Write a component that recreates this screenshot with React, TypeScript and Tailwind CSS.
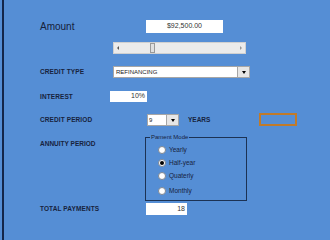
import React from "react";

const font = { fontFamily: '"Liberation Sans", Arial, sans-serif' };

function Radio({ label, checked }: { label: string; checked?: boolean }) {
  return (
    <div className="flex items-center gap-[3px] h-[8px]">
      <span className="w-[8px] h-[8px] rounded-full bg-white border border-[#7d8590] flex items-center justify-center">
        {checked && <span className="w-[4px] h-[4px] rounded-full bg-black" />}
      </span>
      <span className="text-[6.5px] text-[#17233d]">{label}</span>
    </div>
  );
}

function Label({ children, w }: { children: React.ReactNode; w: string }) {
  return (
    <div className={`${w} shrink-0 text-[6.5px] font-bold text-[#17233d] tracking-[0.1px]`}>
      {children}
    </div>
  );
}

export default function App() {
  return (
    <div style={font} className="w-[330px] h-screen min-h-[220px] bg-[#558ed5] pl-[2px] overflow-hidden">
      <div className="h-full border-l-2 border-[#14264a] pl-[36px] flex flex-col">
        {/* amount */}
        <div className="flex items-center h-[13px] mt-[20px]">
          <div className="w-[106px] shrink-0 text-[10px] text-[#16213a]">Amount</div>
          <div className="w-[77px] h-[13px] bg-white flex items-center justify-center text-[7px] text-[#333]">
            $92,500.00
          </div>
        </div>

        {/* scrollbar */}
        <div className="flex items-center h-[12px] mt-[9px]">
          <div className="w-[73px] shrink-0" />
          <div className="w-[133px] h-[12px] bg-[#ebebeb] border border-[#d0d0d0] flex items-center px-[3px]">
            <span className="w-0 h-0 border-y-[2px] border-y-transparent border-r-[2px] border-r-[#555]" />
            <div className="w-[31px]" />
            <span className="w-[5px] h-[10px] bg-[#e0e0e0] border border-[#9a9a9a]" />
            <div className="flex-1" />
            <span className="w-0 h-0 border-y-[2px] border-y-transparent border-l-[2px] border-l-[#999]" />
          </div>
        </div>

        {/* credit type */}
        <div className="flex items-center h-[12px] mt-[12px]">
          <Label w="w-[73px]">CREDIT TYPE</Label>
          <div className="w-[137px] h-[12px] bg-white border border-[#a6a6a6] flex items-center">
            <span className="flex-1 pl-[2px] text-[6px] text-[#222]">REFINANCING</span>
            <span className="w-[12px] h-[10px] bg-[#e6e6e6] border-l border-[#a6a6a6] flex items-center justify-center">
              <span className="w-0 h-0 border-x-[2.5px] border-x-transparent border-t-[3px] border-t-black" />
            </span>
          </div>
        </div>

        {/* interest */}
        <div className="flex items-center h-[11px] mt-[13px]">
          <Label w="w-[70px]">INTEREST</Label>
          <div className="w-[37px] h-[11px] bg-white flex items-center justify-end pr-[2px] text-[7px] text-[#333]">
            10%
          </div>
        </div>

        {/* credit period */}
        <div className="flex items-center h-[12px] mt-[12px]">
          <Label w="w-[107px]">CREDIT PERIOD</Label>
          <div className="w-[32px] h-[12px] bg-white border border-[#a6a6a6] flex items-center">
            <span className="flex-1 pl-[1px] text-[6px] text-[#222]">9</span>
            <span className="w-[12px] h-[10px] bg-[#e6e6e6] border-l border-[#a6a6a6] flex items-center justify-center">
              <span className="w-0 h-0 border-x-[2.5px] border-x-transparent border-t-[3px] border-t-black" />
            </span>
          </div>
          <div className="w-[9px]" />
          <div className="w-[71px] shrink-0 text-[6.5px] font-bold text-[#17233d]">YEARS</div>
          <div className="w-[38px] h-[13px] border-2 border-[#c07a2a] -mt-[1px]" />
        </div>

        {/* annuity period */}
        <div className="flex items-start h-[64px] mt-[11px]">
          <div className="w-[105px] shrink-0 text-[6.5px] font-bold text-[#17233d] mt-[2px]">
            ANNUITY PERIOD
          </div>
          <fieldset className="w-[102px] h-[67px] -mt-[3px] border border-[#1c3254] flex flex-col">
            <legend className="ml-[4px] px-[1px] text-[6px] text-[#17233d] leading-[6px]">Pament Mode</legend>
            <div className="flex flex-col gap-[5px] pl-[12px] pt-[6px]">
              <Radio label="Yearly" />
              <Radio label="Half-year" checked />
              <Radio label="Quaterly" />
              <div className="mt-[2px]">
                <Radio label="Monthly" />
              </div>
            </div>
          </fieldset>
        </div>

        {/* total payments */}
        <div className="flex items-center h-[12px] mt-[2px]">
          <Label w="w-[106px]">TOTAL PAYMENTS</Label>
          <div className="w-[41px] h-[12px] bg-white flex items-center justify-end pr-[2px] text-[7px] text-[#333]">
            18
          </div>
        </div>
      </div>
    </div>
  );
}
